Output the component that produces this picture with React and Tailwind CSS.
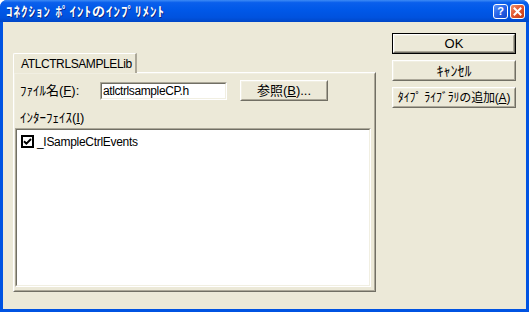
import React from 'react';

const font = "font-['Liberation_Sans','Noto_Sans_CJK_JP',sans-serif]";

// classic raised push button; OK gets the extra black default frame
const PushButton = ({ children, isDefault, className = '' }) => {
  const body = (
    <div className="h-full border border-t-white border-l-white border-r-[#716F64] border-b-[#716F64]">
      <div className="h-full flex items-center justify-center border border-t-[#F1EFE2] border-l-[#F1EFE2] border-r-[#ACA899] border-b-[#ACA899] text-[13px] leading-none text-black whitespace-nowrap">
        {children}
      </div>
    </div>
  );
  return (
    <div className={`bg-[#ECE9D8] ${isDefault ? 'border border-black' : ''} ${className}`}>
      {body}
    </div>
  );
};

// sunken 2px edge used by the edit box and the list
const Sunken = ({ children, className = '' }) => (
  <div className={`border border-t-[#ACA899] border-l-[#ACA899] border-r-white border-b-white ${className}`}>
    <div className="h-full border border-t-[#716F64] border-l-[#716F64] border-r-[#F1EFE2] border-b-[#F1EFE2] bg-white">
      {children}
    </div>
  </div>
);

const TitleButtons = () => (
  <div className="flex items-center gap-[2px]">
    <div className="w-[15px] h-[15px] rounded-[3px] border border-white bg-[linear-gradient(135deg,#5C95F8_0%,#2662E8_50%,#1445C9_100%)] flex items-center justify-center">
      <span className="text-white text-[11px] font-bold leading-none font-['Liberation_Sans',sans-serif]">?</span>
    </div>
    <div className="w-[15px] h-[15px] rounded-[3px] border border-white bg-[linear-gradient(135deg,#F0906C_0%,#E2542D_50%,#C23A16_100%)] flex items-center justify-center">
      <svg width="9" height="9" viewBox="0 0 9 9">
        <path d="M1.5 1.5 L7.5 7.5 M7.5 1.5 L1.5 7.5" stroke="white" strokeWidth="2" strokeLinecap="square" />
      </svg>
    </div>
  </div>
);

const CheckBox = () => (
  <div className="w-[13px] h-[13px] border-2 border-black bg-white flex items-center justify-center shrink-0">
    <svg width="9" height="9" viewBox="0 0 9 9">
      <path d="M1 4.2 L3.4 6.6 L8 2" fill="none" stroke="black" strokeWidth="2" />
    </svg>
  </div>
);

export default function App() {
  return (
    <div className={`w-[529px] h-[312px] flex flex-col rounded-t-[7px] overflow-hidden bg-[#0053E2] ${font}`}>
      {/* Title bar */}
      <div className="h-[22px] shrink-0 flex items-center justify-between pl-[6px] pr-[4px] bg-[linear-gradient(180deg,#3D8BF5_0%,#0A5FEC_12%,#0058E8_45%,#0052DE_80%,#0046C6_100%)]">
        <span className="text-white text-[13px] font-bold leading-none tracking-[1px] [text-shadow:1px_1px_0_#0A2A8A]">
          ｺﾈｸｼｮﾝ ﾎﾟｲﾝﾄのｲﾝﾌﾟﾘﾒﾝﾄ
        </span>
        <TitleButtons />
      </div>

      {/* Client area */}
      <div className="flex-1 mx-[3px] mb-[3px] bg-[#ECE9D8] flex">
        {/* Tab control */}
        <div className="ml-[10px] pt-[31px] w-[363px] flex flex-col">
          <div className="relative z-10 w-[124px] h-[20px] -mb-[1px] bg-[#ECE9D8] border-t border-l border-t-white border-l-white border-r-2 border-r-[#ACA899] rounded-tl-[2px] flex items-center pl-[7px]">
            <span className="text-[12px] leading-none tracking-[-0.4px] text-black">ATLCTRLSAMPLELib</span>
          </div>
          <div className="h-[220px] border-t border-l border-t-white border-l-white border-r border-b border-r-[#716F64] border-b-[#716F64]">
            <div className="h-full flex flex-col border-t border-l border-t-[#F1EFE2] border-l-[#F1EFE2] border-r border-b border-r-[#ACA899] border-b-[#ACA899] pt-[6px]">
              <div className="flex items-center h-[21px] pl-[5px]">
                <span className="w-[80px] text-[13px] leading-none text-black">
                  ﾌｧｲﾙ名(<span className="underline">F</span>):
                </span>
                <Sunken className="w-[127px] h-[18px]">
                  <div className="h-full flex items-center pl-[1px] text-[12px] tracking-[-0.4px] leading-none text-black">atlctrlsampleCP.h</div>
                </Sunken>
                <PushButton className="ml-[13px] w-[88px] h-[21px]">
                  参照(<span className="underline">B</span>)...
                </PushButton>
              </div>
              <div className="mt-[9px] h-[14px] pl-[5px] flex items-center text-[13px] leading-none text-black">
                ｲﾝﾀｰﾌｪｲｽ(<span className="underline">I</span>)
              </div>
              <Sunken className="mt-[4px] w-[356px] h-[159px]">
                <div className="flex items-center pt-[5px] pl-[4px] gap-[3px]">
                  <CheckBox />
                  <span className="text-[12px] leading-none tracking-[-0.3px] text-black">_ISampleCtrlEvents</span>
                </div>
              </Sunken>
            </div>
          </div>
        </div>

        {/* Right-hand buttons */}
        <div className="ml-[16px] pt-[11px] w-[124px] flex flex-col gap-[6px]">
          <PushButton isDefault className="h-[21px]">OK</PushButton>
          <PushButton className="h-[21px]">
            <span className="text-[14px]">ｷｬﾝｾﾙ</span>
          </PushButton>
          <PushButton className="h-[21px]">
            <span className="text-[12px] tracking-[-0.2px]">ﾀｲﾌﾟ ﾗｲﾌﾞﾗﾘの追加(<span className="underline">A</span>)</span>
          </PushButton>
        </div>
      </div>
    </div>
  );
}
